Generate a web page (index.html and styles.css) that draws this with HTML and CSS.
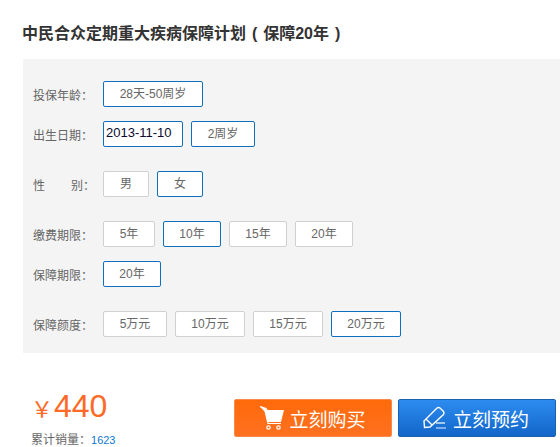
FILE: index.html
```html
<!DOCTYPE html>
<html lang="zh-CN">
<head>
    <meta charset="UTF-8">
    <title>中民合众定期重大疾病保障计划</title>
    <link rel="stylesheet" href="styles.css">
</head>
<body>
    <div class="container">
        <h1>中民合众定期重大疾病保障计划 ( 保障20年 )</h1>
        <div class="panel">
            <div class="row">
                <span class="label">投保年龄：</span>
                <span class="opt on w100">28天-50周岁</span>
            </div>
            <div class="row gap-lg">
                <span class="label">出生日期：</span>
                <span class="opt on date">2013-11-10</span>
                <span class="opt on w64">2周岁</span>
            </div>
            <div class="row gap-lg">
                <span class="label label-spread"><span>性</span><span>别：</span></span>
                <span class="opt w46">男</span>
                <span class="opt on w46">女</span>
            </div>
            <div class="row">
                <span class="label">缴费期限：</span>
                <span class="opt w52">5年</span>
                <span class="opt on w58">10年</span>
                <span class="opt w58">15年</span>
                <span class="opt w58">20年</span>
            </div>
            <div class="row gap-lg">
                <span class="label">保障期限：</span>
                <span class="opt on w58">20年</span>
            </div>
            <div class="row last">
                <span class="label">保障颜度：</span>
                <span class="opt w64">5万元</span>
                <span class="opt w70">10万元</span>
                <span class="opt w70">15万元</span>
                <span class="opt on w70">20万元</span>
            </div>
        </div>
        <div class="buy">
            <div class="price-box">
                <div class="price"><span class="yen">￥</span>440</div>
                <div class="sold">累计销量：<span class="sold-num">1623</span></div>
            </div>
            <div class="btn btn-buy">
                <svg class="icon" width="24" height="24" viewBox="0 0 24 24">
                    <path d="M0 0.500 L6 2.500 L8 4 H24 L21 16 H7 L4.500 5.500" fill="#fff"/>
                    <path d="M0 0.500 L6 2.500 L8 17.500 H21" stroke="#fff" stroke-width="1.2" fill="none"/>
                    <circle cx="8.500" cy="21.500" r="1.700" fill="none" stroke="#fff" stroke-width="1.200"/>
                    <circle cx="18.500" cy="21.500" r="1.700" fill="none" stroke="#fff" stroke-width="1.200"/>
                </svg>
                立刻购买
            </div>
            <div class="btn btn-book">
                <svg class="icon" width="26" height="26" viewBox="0 0 26 26">
                    <path d="M2 16 L15 3 Q16.500 2 18 3 L21.500 6.500 Q22.500 8 21.500 9.500 L8 22 L2.500 22.500 Z M4 14 L10 20" fill="none" stroke="#fff" stroke-width="1.4"/>
                    <path d="M14 18 H23" stroke="#fff" stroke-width="1.200"/>
                    <path d="M14 23 H24" stroke="#a9cdf5" stroke-width="1.400"/>
                </svg>
                立刻预约
            </div>
        </div>
    </div>
</body>
</html>
```

FILE: styles.css
```css
html, body {
    margin: 0;
    padding: 0;
    overflow: hidden;
}
body {
    font-family: "Liberation Sans", "Noto Sans CJK SC", sans-serif;
    font-size: 12px;
    color: #666;
    background: #fff;
}
.container {
    padding: 24px 0 0 23px;
}
h1 {
    margin: 0 0 15px -1px;
    font-size: 16px;
    line-height: 20px;
    font-weight: bold;
    word-spacing: 1.5px;
    color: #333;
}
.panel {
    background: #f4f4f4;
    padding: 22px 0 16px 10px;
}
.row {
    display: flex;
    align-items: center;
    gap: 8px;
    margin-bottom: 14px;
}
.row.gap-lg {
    margin-bottom: 24px;
}
.row.last {
    margin-bottom: 0;
}
.label {
    width: 62px;
    color: #666;
}
.label-spread {
    display: flex;
    justify-content: space-between;
}
.opt {
    box-sizing: border-box;
    height: 26px;
    line-height: 24px;
    text-align: center;
    background: #fff;
    border: 1px solid #d0d0d0;
    border-radius: 2px;
    color: #666;
}
.opt.on {
    border-color: #0f70bf;
}
.date {
    width: 80px;
    padding-left: 2px;
    text-align: left;
    font-size: 13px;
    line-height: 22px;
    color: #0a0a30;
}
.w46 { width: 46px; }
.w52 { width: 52px; }
.w58 { width: 58px; }
.w64 { width: 64px; }
.w70 { width: 70px; }
.w100 { width: 100px; }
.buy {
    display: flex;
    margin-top: 46px;
    align-items: flex-start;
}
.price-box {
    flex: none;
    width: 211px;
    padding-left: 8px;
    box-sizing: border-box;
}
.price {
    margin-top: -12px;
    color: #ff6a26;
    font-size: 32px;
    line-height: 38px;
}
.yen {
    font-size: 22px;
    margin-right: 1px;
}
.sold {
    margin-top: 3px;
    line-height: 16px;
}
.sold-num {
    color: #0f78d0;
    font-size: 11px;
}
.btn {
    flex: none;
    box-sizing: border-box;
    width: 158px;
    height: 38px;
    margin-right: 6px;
    display: flex;
    align-items: center;
    justify-content: center;
    gap: 5px;
    border-radius: 2px;
    color: #fff;
    font-size: 19px;
}
.btn-buy {
    background: linear-gradient(#ff6a0a, #ff7020);
    border: 1px solid #f98a4a;
}
.btn-book {
    padding-right: 3px;
    background: linear-gradient(#2d8cf0, #1266c8);
    border: 1px solid #1a62b0;
}
```
